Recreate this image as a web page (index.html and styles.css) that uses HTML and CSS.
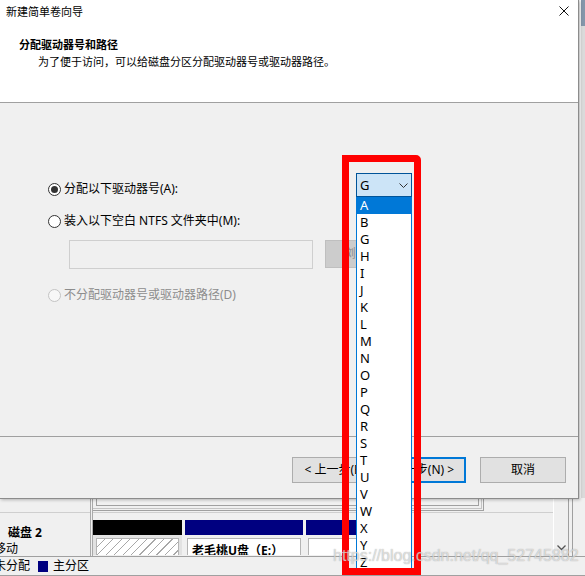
FILE: index.html
```html
<!DOCTYPE html>
<html lang="zh-CN">
<head>
<meta charset="utf-8">
<title>新建简单卷向导</title>
<link rel="stylesheet" href="styles.css">
</head>
<body>
<div class="screen">
  <div class="bgwin">
    <div class="bg-top">
      <div class="edge"><div class="edge-icon"></div></div>
    </div>
    <div class="lower">
      <div class="lower-main">
        <div class="leftcol">
          <div class="lc-top"></div>
          <div class="disk-label"><b>磁盘 2</b><span>移动</span></div>
        </div>
        <div class="rightcol">
          <div class="frames"><div class="f1"><div class="f2"><div class="f3"></div></div></div></div>
          <div class="graph">
            <div class="part unalloc"><div class="bar black"></div><div class="pbox hatch"></div></div>
            <div class="part prim"><div class="bar navy"></div><div class="pbox label">老毛桃U盘（E:）</div></div>
            <div class="part prim third"><div class="bar navy"></div><div class="pbox"></div></div>
          </div>
        </div>
        <div class="vscroll">
          <svg width="9" height="6" viewBox="0 0 9 6"><polyline points="0.5,0.5 4.5,4.5 8.5,0.5" fill="none" stroke="#555" stroke-width="1.3"/></svg>
        </div>
        <div class="rborder"></div>
      </div>
      <div class="statusbar">
        <span>未分配</span><span class="legend"></span><span class="legend-text">主分区</span>
      </div>
    </div>
  </div>

  <div class="dialog">
    <div class="head">
      <div class="titlebar">
        <span>新建简单卷向导</span>
        <svg class="close" width="10" height="10" viewBox="0 0 10 10"><path d="M0.5 0.5 L9.5 9.5 M9.5 0.5 L0.5 9.5" stroke="#111" stroke-width="1"/></svg>
      </div>
      <div class="h-title">分配驱动器号和路径</div>
      <div class="h-sub">为了便于访问，可以给磁盘分区分配驱动器号或驱动器路径。</div>
    </div>
    <div class="wbody">
      <div class="radio-row"><span class="radio on"></span><span>分配以下驱动器号(A):</span></div>
      <div class="radio-row second"><span class="radio"></span><span>装入以下空白 NTFS 文件夹中(M):</span></div>
      <div class="path-row"><div class="textbox"></div><div class="browse">浏览(R)...</div></div>
      <div class="radio-row disabled"><span class="radio dim"></span><span>不分配驱动器号或驱动器路径(D)</span></div>
    </div>
    <div class="footer">
      <div class="btn">&lt; 上一步(B)</div>
      <div class="btn default">下一步(N) &gt;</div>
      <div class="btn cancel">取消</div>
    </div>
  </div>

  <div class="dropdown">
    <div class="combo">
      <span>G</span>
      <svg width="9" height="5" viewBox="0 0 9 5"><polyline points="0.5,0.5 4.5,4.5 8.5,0.5" fill="none" stroke="#333" stroke-width="1"/></svg>
    </div>
    <div class="list">
      <div class="sel">A</div><div>B</div><div>G</div><div>H</div><div>I</div><div>J</div><div>K</div><div>L</div><div>M</div><div>N</div><div>O</div><div>P</div><div>Q</div><div>R</div><div>S</div><div>T</div><div>U</div><div>V</div><div>W</div><div>X</div><div>Y</div><div>Z</div>
    </div>
  </div>

  <div class="annot"></div>
  <div class="watermark">https://blog.csdn.net/qq_52745882</div>
</div>
</body>
</html>
```

FILE: styles.css
```css
* { box-sizing: border-box; }
html, body { margin: 0; padding: 0; }
body {
  width: 585px;
  height: 576px;
  overflow: hidden;
  background: #f0f0f0;
  font-family: "Noto Sans", "Noto Sans CJK SC", sans-serif;
  color: #000;
}
.screen { position: relative; width: 585px; height: 576px; overflow: hidden; }

/* background window */
.bgwin { display: flex; flex-direction: column; height: 100%; }
.bg-top { height: 498px; flex: none; display: flex; justify-content: flex-end; }
.edge { width: 5px; background: #dadada; border-left: 1px solid #fbfbfb; }
.edge-icon { height: 26px; background: #8496aa; }

.lower { margin-left: -6px; width: 591px; flex: none; }
.lower-main { display: flex; height: 58px; padding-right: 12px; }
.leftcol { width: 99px; flex: none; border-right: 3px double #a9a9a9; }
.lc-top { height: 15px; border-bottom: 1px solid #cfcfcf; }
.disk-label { padding: 12px 0 0 14px; font-size: 12px; line-height: 16px; }
.disk-label b { display: block; font-weight: 700; }
.disk-label span { display: block; margin-left: -14px; }

.rightcol { flex: 1; min-width: 0; }
.frames { height: 15px; border-bottom: 1px solid #cfcfcf; }
.f1 { width: 391px; height: 13px; border-right: 1px solid #a0a0a0; border-bottom: 1px solid #a0a0a0; }
.f2 { width: 389px; height: 11px; border-right: 1px solid #c4c4c4; border-bottom: 1px solid #c4c4c4; }
.f3 { margin-left: 3px; width: 383px; height: 8px; border: 1px solid #a0a0a0; border-top: none; }

.graph { display: flex; gap: 3px; padding-top: 7px; height: 42px; overflow: hidden; }
.part { display: flex; flex-direction: column; flex: none; }
.unalloc { width: 89px; background: #e2e2e2; }
.prim { width: 118px; }
.third { width: 106px; }
.bar { height: 15px; flex: none; }
.black { background: #000; }
.navy { background: #000080; }
.pbox { margin: 3px 3px 0; flex: 1; background: #fff; border: 1px solid #b4b4b4; border-bottom: none; }
.prim .pbox { margin: 3px 2px 0; }
.hatch { background: repeating-linear-gradient(135deg, #fff 0 5px, #a8a8a8 5px 6px); }
.label { padding: 4px 0 0 4px; font-size: 12px; line-height: 16px; font-weight: 700; white-space: nowrap; overflow: hidden; }

.vscroll { width: 15px; flex: none; border-left: 1px solid #fff; display: flex; justify-content: center; align-items: flex-start; padding-top: 47px; }
.rborder { width: 5px; flex: none; border-left: 1px solid #a0a0a0; border-right: 1px solid #a0a0a0; }

.statusbar {
  height: 20px;
  border-top: 1px solid #a0a0a0;
  border-bottom: 1px solid #a0a0a0;
  display: flex;
  align-items: center;
  font-size: 12px;
  line-height: 16px;
}
.legend { width: 10px; height: 11px; background: #000080; margin-left: 8px; }
.legend-text { margin-left: 5px; }

/* wizard dialog */
.dialog {
  position: absolute;
  left: 0;
  top: 0;
  width: 579px;
  height: 499px;
  background: #f0f0f0;
  border-right: 1px solid #8c8c8c;
  border-bottom: 1px solid #8c8c8c;
  box-shadow: 1px 1px 3px rgba(0, 0, 0, 0.25);
  display: flex;
  flex-direction: column;
}
.head { height: 103px; flex: none; background: #fff; border-bottom: 1px solid #a0a0a0; }
.titlebar { display: flex; justify-content: space-between; height: 24px; padding-left: 6px; font-size: 11px; line-height: 24px; }
.close { margin: 6px 9px 0 0; flex: none; }
.h-title { margin: 13px 0 0 19px; font-size: 11px; font-weight: 700; line-height: 16px; }
.h-sub { margin: 1px 0 0 38px; font-size: 11px; line-height: 16px; }

.wbody { flex: 1; padding: 76px 0 0 48px; font-size: 12px; }
.radio-row { display: flex; align-items: center; height: 20px; line-height: 20px; }
.radio {
  width: 13px;
  height: 13px;
  border: 1px solid #333;
  border-radius: 50%;
  background: #fff;
  margin-right: 3px;
  display: flex;
  align-items: center;
  justify-content: center;
  flex: none;
}
.radio.on::after { content: ""; width: 7px; height: 7px; border-radius: 50%; background: #333; }
.radio-row.second { margin-top: 12px; }
.path-row { display: flex; margin: 9px 0 0 21px; }
.textbox { width: 244px; height: 29px; border: 1px solid #cfcfcf; background: #f0f0f0; }
.browse {
  margin-left: 12px;
  width: 86px;
  height: 28px;
  background: #cccccc;
  border: 1px solid #bfbfbf;
  color: #8a8a8a;
  font-size: 12px;
  line-height: 26px;
  text-align: center;
}
.radio-row.disabled { margin-top: 16px; color: #8d8d8d; }
.radio.dim { border-color: #c4c4c4; background: #f7f7f7; }

.footer {
  height: 62px;
  flex: none;
  border-top: 1px solid #a0a0a0;
  display: flex;
  justify-content: flex-end;
  padding: 20px 12px 0 0;
}
.btn {
  width: 86px;
  height: 26px;
  background: #e1e1e1;
  border: 1px solid #adadad;
  font-size: 12px;
  line-height: 24px;
  text-align: center;
}
.btn + .btn { margin-left: 2px; }
.btn.default { border: 2px solid #0078d7; line-height: 22px; }
.btn.cancel { margin-left: 14px; }

/* open combobox popup */
.dropdown { position: absolute; left: 356px; top: 173px; width: 56px; font-size: 13px; }
.combo {
  height: 24px;
  background: #cce4f7;
  border: 1px solid #005499;
  display: flex;
  align-items: center;
  justify-content: space-between;
  padding: 0 3px 0 3px;
}
.list { border: 1px solid #0078d7; border-top: none; background: #fff; }
.list div { height: 17px; line-height: 17px; padding-left: 3px; }
.list .sel { background: #0078d7; color: #fff; }

/* annotation + watermark */
.annot {
  position: absolute;
  left: 342px;
  top: 155px;
  width: 79px;
  height: 420px;
  border: 7px solid #ff0000;
  border-top-right-radius: 5px;
}
.watermark {
  position: absolute;
  left: 333px;
  top: 547px;
  font-family: "Liberation Sans", sans-serif;
  font-size: 16px;
  line-height: 18px;
  color: rgba(255, 255, 255, 0.6);
  text-shadow: 0 0 1px rgba(110, 110, 110, 0.7);
  white-space: nowrap;
}
```
